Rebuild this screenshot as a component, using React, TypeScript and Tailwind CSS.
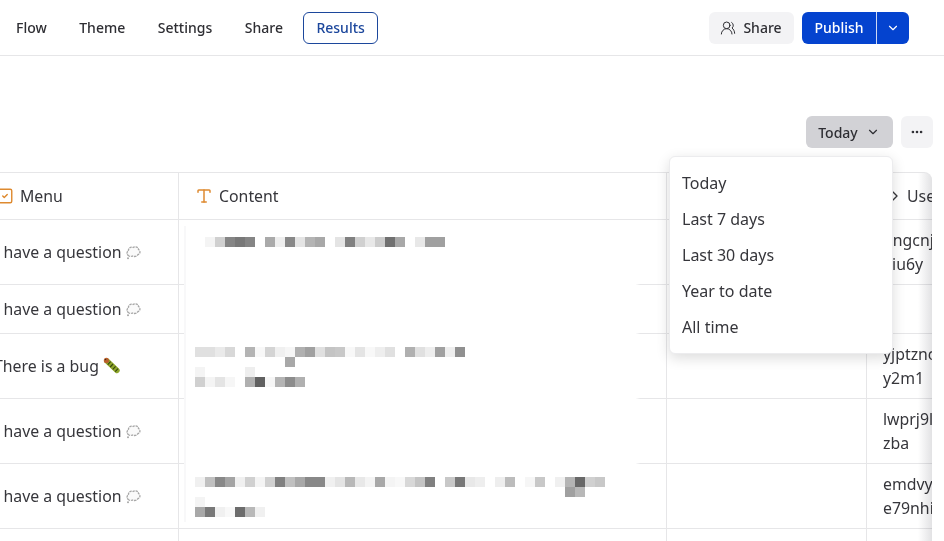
import { ChevronDown, ChevronRight, Ellipsis, SquareCheck, Type, UsersRound } from "lucide-react";

const tabs = ["Flow", "Theme", "Settings", "Share"];
const ranges = ["Today", "Last 7 days", "Last 30 days", "Year to date", "All time"];

const mosaic: { x: number; y: number; cells: string[] }[] = [
  { x: 195, y: 237, cells: ["ff", "f4", "d0", "85", "78", "85", "ff", "aa", "ee", "88", "e4", "b4", "a8", "ff", "e4", "80", "d0", "e8", "cc", "70", "a8", "ff", "e8", "a0", "a0"] },
  { x: 195, y: 347, cells: ["e0", "e0", "ea", "d8", "ff", "b4", "f8", "d4", "f0", "f6", "b0", "a0", "e0", "c4", "c8", "f8", "e4", "f8", "ee", "e0", "ff", "b0", "e0", "ee", "a0", "ee", "90"] },
  { x: 195, y: 357, cells: ["ff", "ff", "ff", "ff", "ff", "ff", "ff", "ff", "ff", "a8"] },
  { x: 195, y: 367, cells: ["f4", "ff", "ff", "ff", "ff", "ee"] },
  { x: 195, y: 377, cells: ["d0", "f4", "e4", "f6", "ff", "b0", "60", "f6", "b4", "8c", "b0"] },
  { x: 195, y: 477, cells: ["f0", "c0", "88", "a4", "f0", "d0", "f4", "d0", "80", "c0", "a8", "88", "88", "f0", "e4", "b8", "e8", "f4", "a8", "f4", "f8", "d8", "c4", "80", "ff", "c8", "78", "e8", "ee", "ff", "ee", "bc", "ff", "f6", "c8", "ff", "f0", "b4", "68", "d0", "c8"] },
  { x: 565, y: 487, cells: ["a0", "b8"] },
  { x: 195, y: 497, cells: ["f4"] },
  { x: 195, y: 507, cells: ["a8", "78", "f0", "f8", "6c", "b8", "f0"] },
];

const rows = [
  { h: "h-[65px]", menu: "I have a question", emoji: "think", user: ["hngcnjv", "6iu6y"] },
  { h: "h-[49px]", menu: "I have a question", emoji: "think", user: [] },
  { h: "h-[65px]", menu: "There is a bug", emoji: "bug", user: ["yjptznc", "y2m1"] },
  { h: "h-[65px]", menu: "I have a question", emoji: "think", user: ["lwprj9l", "zba"] },
  { h: "h-[65px]", menu: "I have a question", emoji: "think", user: ["emdvy", "e79nhi"] },
];

function Thought() {
  return (
    <svg width="15" height="15" viewBox="0 0 15 15" className="shrink-0">
      <path d="M3 11 C0.5 10 0.5 6.5 2.5 6 C2 3 5 1.5 7 2.5 C9 1 12.5 2 12.5 4.5 C14.5 5.5 14.5 9 12 9.5 C11 11.5 8 12 6.5 11 C5.5 11.5 4 11.5 3 11 Z" fill="#fafafa" stroke="#a6a6a6" strokeWidth="1.3" strokeDasharray="2.4 0.8" />
      <circle cx="2" cy="13.2" r="1" fill="#a8a8a8" />
    </svg>
  );
}

function Bug() {
  return (
    <svg width="18" height="18" viewBox="0 0 18 18" className="shrink-0">
      <path d="M4 4 L14 13.5" stroke="#8ea52a" strokeWidth="5.4" strokeLinecap="round" />
      <path d="M7.6 4.6 L4.8 7.6 M10 7 L7.2 10 M12.6 9.4 L9.8 12.4 M15 11.6 L12.2 14.6" stroke="#35470f" strokeWidth="1.1" />
      <circle cx="3.4" cy="3.4" r="2.6" fill="#b9602c" />
      <circle cx="2.6" cy="2.6" r="0.7" fill="#262626" />
    </svg>
  );
}

function Cell({ className, children }: { className: string; children?: React.ReactNode }) {
  return <div className={`flex items-center shrink-0 border-r border-[#e6e6e8] ${className}`}>{children}</div>;
}

export default function App() {
  return (
    <div className="relative h-[541px] w-full overflow-hidden bg-white text-[#2e2e33] font-['Noto_Sans','Open_Sans',sans-serif]">
      <header className="flex h-[56px] items-center justify-between border-b border-[#e6e6e8] pl-[3px] pr-[35px] text-[14px] font-medium">
        <nav className="flex items-center gap-[6.5px]">
          {tabs.map((t) => (
            <button key={t} className="h-8 rounded-md border border-transparent px-3">
              {t}
            </button>
          ))}
          <button className="ml-px h-8 rounded-md border border-[#1c479c] px-3 text-[#1c479c]">Results</button>
        </nav>
        <div className="flex items-center gap-2">
          <button className="flex h-8 w-[85px] items-center justify-center gap-[7px] rounded-md bg-[#f3f3f5] pr-px">
            <UsersRound size={16} strokeWidth={1.5} />
            Share
          </button>
          <div className="flex h-8 overflow-hidden rounded-md bg-[#0443cf] text-white">
            <button className="w-[74px]">Publish</button>
            <div className="w-px bg-[#cfd9f3]" />
            <button className="flex w-8 items-center justify-center">
              <ChevronDown size={14} />
            </button>
          </div>
        </div>
      </header>

      <div className="flex h-[60px] items-start justify-end gap-2 pt-[60px] pr-[11px] text-[14px] font-medium">
        <button className="flex h-8 w-[87px] shrink-0 items-center justify-center gap-2 rounded-md bg-[#d2d2d6] pr-px leading-[19px]">
          Today
          <ChevronDown size={14} />
        </button>
        <button className="flex h-8 w-8 shrink-0 items-center justify-center rounded-md bg-[#f3f3f5]">
          <Ellipsis size={14} strokeWidth={2.5} />
        </button>
      </div>

      <section className="relative mt-[56px] mr-3 ml-[-22px] overflow-hidden rounded-tr-lg border-t border-[#e6e6e8] text-[15.85px] leading-[24px] text-[#36363b]">
        <div className="flex h-[47px] border-b border-[#e6e6e8]">
          <Cell className="w-[201px] gap-1.5 px-4">
            <SquareCheck size={18} strokeWidth={1.9} className="ml-0.5 text-[#de8a30]" />
            Menu
          </Cell>
          <Cell className="w-[488px] gap-1.5 px-4">
            <Type size={18} strokeWidth={2} className="text-[#de8a30]" />
            Content
          </Cell>
          <Cell className="w-[200px]" />
          <div className="flex shrink-0 items-center gap-1 px-4">
            <ChevronRight size={16} strokeWidth={2} className="ml-1" />
            User
          </div>
        </div>

        {rows.map((r, i) => (
          <div key={i} className={`flex border-b border-[#e6e6e8] ${r.h}`}>
            <Cell className="w-[201px] gap-1 px-4 whitespace-nowrap">
              {r.menu}
              {r.emoji === "bug" ? <Bug /> : <Thought />}
            </Cell>
            <Cell className="w-[488px]" />
            <Cell className="w-[200px]" />
            <div className="flex shrink-0 flex-col justify-center px-4 whitespace-nowrap">
              {r.user.map((l) => (
                <span key={l}>{l}</span>
              ))}
            </div>
          </div>
        ))}
        <div className="flex h-[14px]">
          <Cell className="w-[201px]" />
          <Cell className="w-[488px]" />
          <Cell className="w-[200px]" />
        </div>

        <div className="absolute top-0 right-0 bottom-0 w-[14px] bg-linear-to-r from-white to-[#e2e2e4] mix-blend-multiply" />
      </section>

      <svg className="absolute top-[226px] left-[184px]" width="456" height="300" viewBox="184 226 456 300">
        <defs>
          <linearGradient id="patch" x1="0" x2="1" y1="0" y2="0">
            <stop offset="0.99" stopColor="#fff" />
            <stop offset="1" stopColor="#fff" stopOpacity="0" />
          </linearGradient>
        </defs>
        <rect x="184" y="226" width="456" height="300" fill="url(#patch)" />
        <rect x="184" y="226" width="2" height="296" fill="#f8f8f9" />
        {mosaic.map((row) =>
          row.cells.map((c, i) => (
            <rect key={`${row.y}-${row.x}-${i}`} x={row.x + i * 10} y={row.y} width="10" height="10" fill={`#${c}${c}${c}`} />
          )),
        )}
      </svg>

      <ul className="absolute top-[156px] left-[669px] w-[224px] rounded-md border border-[#ececee] bg-white py-2 text-[16px] text-[#36363b] shadow-[0_4px_14px_rgba(0,0,0,0.14)]">
        {ranges.map((r) => (
          <li key={r} className="flex h-9 items-center px-3">
            {r}
          </li>
        ))}
      </ul>
    </div>
  );
}
